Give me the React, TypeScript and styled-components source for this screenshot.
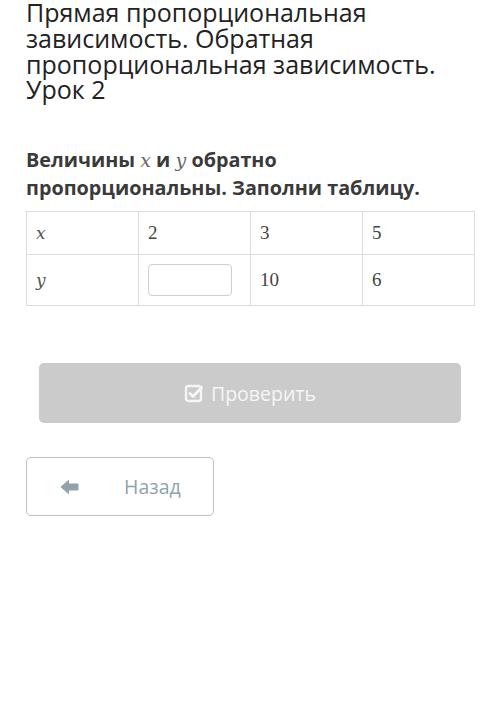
import React, { useState } from 'react';
import styled, { createGlobalStyle } from 'styled-components';

const GlobalStyle = createGlobalStyle`
  html, body {
    margin: 0;
    padding: 0;
    background: #ffffff;
  }
  body {
    font-family: "Open Sans", "Noto Sans", sans-serif;
  }
`;

const Page = styled.div`
  width: 500px;
  min-height: 719px;
  box-sizing: border-box;
  padding: 0 26px;
  overflow: hidden;
`;

const Title = styled.h1`
  margin: 0;
  font-size: 25px;
  font-weight: 400;
  line-height: 25.8px;
  color: #222;
  max-width: 440px;
`;

const Question = styled.p`
  margin: 43px 0 0 0;
  font-size: 19.8px;
  font-weight: 700;
  line-height: 27px;
  color: #3a3a3a;
  max-width: 420px;
`;

const MathVar = styled.span`
  font-family: "DejaVu Serif", "Liberation Serif", serif;
  font-style: italic;
  font-weight: 400;
  font-size: 19px;
  color: #666;
`;

const Table = styled.div`
  margin-top: 10px;
  width: 448px;
  display: grid;
  grid-template-columns: repeat(4, 1fr);
  border-top: 1px solid #dcdcdc;
  border-left: 1px solid #dcdcdc;
`;

const Cell = styled.div<{ tall?: boolean }>`
  height: ${p => (p.tall ? '50px' : '42px')};
  border-right: 1px solid #dcdcdc;
  border-bottom: 1px solid #dcdcdc;
  display: flex;
  align-items: center;
  padding: 0 9px;
  font-family: "Liberation Serif", "DejaVu Serif", serif;
  font-size: 19px;
  color: #444;
`;

const CellVar = styled.span`
  font-style: italic;
  font-family: "DejaVu Serif", "Liberation Serif", serif;
  font-size: 17px;
  color: #555;
`;

const AnswerInput = styled.input`
  width: 84px;
  height: 32px;
  box-sizing: border-box;
  border: 1px solid #cfcfcf;
  border-radius: 4px;
  outline: none;
  font-size: 16px;
`;

const Actions = styled.div`
  display: flex;
  flex-direction: column;
  align-items: flex-start;
  margin-top: 57px;
`;

const CheckButton = styled.button`
  margin-left: 13px;
  width: 422px;
  height: 60px;
  border: none;
  border-radius: 5px;
  background: #cbcbcb;
  color: #f6f6f6;
  font-family: "Open Sans", sans-serif;
  font-size: 19.5px;
  display: flex;
  align-items: center;
  justify-content: center;
  gap: 7px;
  padding: 0;
  cursor: default;
`;

const BackButton = styled.button`
  margin-top: 34px;
  width: 188px;
  height: 59px;
  box-sizing: border-box;
  border: 1.5px solid #b9c3c8;
  border-radius: 5px;
  background: #fff;
  color: #8fa3ad;
  font-family: "Open Sans", sans-serif;
  font-size: 19.5px;
  display: flex;
  align-items: center;
  padding: 0 0 0 33px;
  gap: 45px;
  cursor: pointer;
`;

const CheckIcon = () => (
  <svg width="20" height="20" viewBox="0 0 20 20" fill="none">
    <rect x="2" y="3" width="15" height="15" rx="2.5" stroke="#f6f6f6" strokeWidth="2.4" />
    <path d="M6 10.5l3 3 8.5-9" stroke="#f6f6f6" strokeWidth="2.8" strokeLinecap="round" strokeLinejoin="round" />
  </svg>
);

const ArrowIcon = () => (
  <svg width="19" height="16" viewBox="0 0 19 16">
    <path d="M1 8 L8.5 1.5 L8.5 5 L18 5 L18 11 L8.5 11 L8.5 14.5 Z" fill="#8fa3ad" strokeLinejoin="round" stroke="#8fa3ad" strokeWidth="1" />
  </svg>
);

export default function App() {
  const [value, setValue] = useState('');
  return (
    <Page>
      <GlobalStyle />
      <Title>
        Прямая пропорциональная зависимость. Обратная пропорциональная зависимость. Урок 2
      </Title>
      <Question>
        Величины <MathVar>x</MathVar> и <MathVar>y</MathVar> обратно пропорциональны. Заполни таблицу.
      </Question>
      <Table>
        <Cell><CellVar>x</CellVar></Cell>
        <Cell>2</Cell>
        <Cell>3</Cell>
        <Cell>5</Cell>
        <Cell tall><CellVar>y</CellVar></Cell>
        <Cell tall>
          <AnswerInput value={value} onChange={e => setValue(e.target.value)} />
        </Cell>
        <Cell tall>10</Cell>
        <Cell tall>6</Cell>
      </Table>
      <Actions>
        <CheckButton>
          <CheckIcon />
          Проверить
        </CheckButton>
        <BackButton>
          <ArrowIcon />
          Назад
        </BackButton>
      </Actions>
    </Page>
  );
}
